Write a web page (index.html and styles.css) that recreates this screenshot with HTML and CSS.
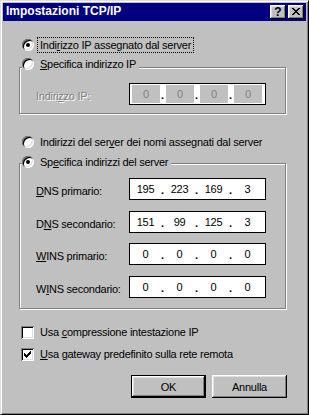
FILE: index.html
```html
<!DOCTYPE html>
<html lang="it">
<head>
<meta charset="utf-8">
<title>Impostazioni TCP/IP</title>
<link rel="stylesheet" href="styles.css">
</head>
<body>
<div class="window">
  <div class="titlebar">
    <span class="title">Impostazioni TCP/IP</span>
    <div class="cap-btns">
      <span class="cap-btn help">?</span>
      <span class="cap-btn close"><svg width="8" height="7" viewBox="0 0 8 7"><path fill="#000" d="M0 0h2v1H0zM6 0h2v1H6zM1 1h2v1H1zM5 1h2v1H5zM2 2h4v1H2zM3 3h2v1H3zM2 4h4v1H2zM1 5h2v1H1zM5 5h2v1H5zM0 6h2v1H0zM6 6h2v1H6z"/></svg></span>
    </div>
  </div>
  <div class="body">
    <div class="opt opt1"><span class="radio checked"></span><span class="lbl focus">Indi<u>r</u>izzo IP assegnato dal server</span></div>

    <div class="group g1">
      <div class="opt head"><span class="radio"></span><span class="lbl"><u>S</u>pecifica indirizzo IP</span></div>
      <div class="frow">
        <span class="flbl dis">Indiri<u>z</u>zo IP:</span>
        <div class="ip dis"><span class="seg">0</span><span class="dot">.</span><span class="seg">0</span><span class="dot">.</span><span class="seg">0</span><span class="dot">.</span><span class="seg">0</span></div>
      </div>
    </div>

    <div class="opt opt3"><span class="radio"></span><span class="lbl">Indirizzi del ser<u>v</u>er dei nomi assegnati dal server</span></div>

    <div class="group g2">
      <div class="opt head"><span class="radio checked"></span><span class="lbl">Sp<u>e</u>cifica indirizzi del server</span></div>
      <div class="frow r1">
        <span class="flbl"><u>D</u>NS primario:</span>
        <div class="ip"><span class="seg">195</span><span class="dot">.</span><span class="seg">223</span><span class="dot">.</span><span class="seg">169</span><span class="dot">.</span><span class="seg">3</span></div>
      </div>
      <div class="frow r2">
        <span class="flbl">D<u>N</u>S secondario:</span>
        <div class="ip"><span class="seg">151</span><span class="dot">.</span><span class="seg">99</span><span class="dot">.</span><span class="seg">125</span><span class="dot">.</span><span class="seg">3</span></div>
      </div>
      <div class="frow r3">
        <span class="flbl"><u>W</u>INS primario:</span>
        <div class="ip"><span class="seg">0</span><span class="dot">.</span><span class="seg">0</span><span class="dot">.</span><span class="seg">0</span><span class="dot">.</span><span class="seg">0</span></div>
      </div>
      <div class="frow r4">
        <span class="flbl">W<u>I</u>NS secondario:</span>
        <div class="ip"><span class="seg">0</span><span class="dot">.</span><span class="seg">0</span><span class="dot">.</span><span class="seg">0</span><span class="dot">.</span><span class="seg">0</span></div>
      </div>
    </div>

    <div class="opt chk-row c1"><span class="chk"></span><span class="lbl">Usa <u>c</u>ompressione intestazione IP</span></div>
    <div class="opt chk-row c2"><span class="chk"><svg width="7" height="7" viewBox="0 0 7 7"><path fill="#000" d="M6 0h1v1H6zM5 1h2v1H5zM0 2h1v1H0zM4 2h3v1H4zM0 3h2v1H0zM3 3h3v1H3zM0 4h5v1H0zM1 5h3v1H1zM2 6h1v1H2z"/></svg></span><span class="lbl"><u>U</u>sa gateway predefinito sulla rete remota</span></div>

    <div class="btns">
      <span class="btn default">OK</span>
      <span class="btn">Annulla</span>
    </div>
  </div>
</div>
</body>
</html>
```
FILE: styles.css
```css
* { box-sizing: border-box; }
html, body { margin: 0; padding: 0; }
body {
  width: 309px;
  height: 415px;
  background: #c0c0c0;
  font-family: "Liberation Sans", Arial, sans-serif;
  font-size: 11px;
  color: #000;
}
.window {
  width: 309px;
  height: 415px;
  background: #c0c0c0;
  border: 1px solid;
  border-color: #dfdfdf #000 #000 #dfdfdf;
  box-shadow: inset 1px 1px #fff, inset -1px -1px #808080;
  padding: 2px;
  display: flex;
  flex-direction: column;
}
.titlebar {
  height: 18px;
  flex: none;
  background: #000080;
  display: flex;
  align-items: center;
  padding: 0 2px 0 3px;
}
.title {
  flex: 1;
  align-self: flex-start;
  color: #fff;
  font-weight: bold;
  font-size: 12px;
  line-height: 16px;
  white-space: nowrap;
}
.cap-btns { display: flex; gap: 2px; }
.cap-btn {
  width: 16px;
  height: 14px;
  background: #c0c0c0;
  box-shadow: inset -1px -1px #000, inset 1px 1px #fff, inset -2px -2px #808080, inset 2px 2px #dfdfdf;
  display: flex;
  align-items: center;
  justify-content: center;
}
.help {
  font-weight: bold;
  font-size: 12px;
  line-height: 14px;
  padding-bottom: 1px;
}
.close { padding-bottom: 1px; }
.close svg { display: block; }

.body {
  flex: 1;
  display: flex;
  flex-direction: column;
  align-items: flex-start;
}
.opt {
  display: flex;
  align-items: center;
  height: 16px;
}
.opt1 { margin: 16px 0 0 19px; }
.opt3 { margin: 20px 0 0 19px; }
.lbl {
  margin-left: 3px;
  border: 1px dotted transparent;
  padding: 0 2px;
  line-height: 14px;
  white-space: nowrap;
  letter-spacing: -0.25px;
}
.lbl.focus { border-color: #000; }

.radio {
  flex: none;
  width: 12px;
  height: 12px;
  border-radius: 50%;
  background: #fff;
  box-shadow: inset 1px 1px 0 #808080, inset -1px -1px 0 #fff, inset 2px 2px 0 #000, inset -2px -2px 0 #dfdfdf;
  display: flex;
  align-items: center;
  justify-content: center;
}
.radio.checked::after {
  content: "";
  width: 4px;
  height: 4px;
  border-radius: 50%;
  background: #000;
}

.group {
  margin-left: 16px;
  width: 267px;
  border: 1px solid #808080;
  box-shadow: inset 1px 1px #fff, 1px 1px #fff;
  display: flex;
  flex-direction: column;
  align-items: flex-start;
}
.head {
  background: #c0c0c0;
  margin-left: 2px;
}
.g1 { margin-top: 14px; padding-bottom: 8px; }
.g1 .head { margin-top: -12px; }
.g2 { margin-top: 13px; padding-bottom: 10px; }
.g2 .head { margin-top: -10px; }

.frow {
  display: flex;
  align-items: flex-start;
  margin-left: 16px;
}
.g1 .frow { margin-top: 11px; }
.r1 { margin-top: 8px; }
.r2 { margin-top: 11px; }
.r3 { margin-top: 10px; }
.r4 { margin-top: 11px; }
.flbl {
  width: 93px;
  padding-top: 6px;
  line-height: 14px;
  white-space: nowrap;
  letter-spacing: -0.25px;
}
.flbl.dis {
  color: #808080;
  text-shadow: 1px 1px 0 #fff;
}

.ip {
  width: 137px;
  height: 22px;
  border: 1px solid #000;
  background: #fff;
  display: flex;
}
.seg {
  width: 31px;
  text-align: center;
  line-height: 20px;
  letter-spacing: -0.25px;
}
.dot {
  width: 3px;
  text-align: center;
  line-height: 17px;
  padding-top: 3px;
  font-weight: bold;
}
.ip.dis .seg {
  width: 28px;
  margin: 1px 1px 1px 2px;
  background: #c0c0c0;
  color: #808080;
  line-height: 18px;
}

.chk-row { margin-left: 18px; }
.c1 { margin-top: 15px; }
.c2 { margin-top: 6px; }
.chk {
  flex: none;
  width: 13px;
  height: 13px;
  background: #fff;
  box-shadow: inset 1px 1px 0 #808080, inset -1px -1px 0 #fff, inset 2px 2px 0 #000, inset -2px -2px 0 #dfdfdf;
  display: flex;
  align-items: center;
  justify-content: center;
}
.chk svg { display: block; }

.btns {
  align-self: stretch;
  display: flex;
  justify-content: flex-end;
  gap: 6px;
  margin-top: 13px;
  padding-right: 19px;
}
.btn {
  width: 75px;
  height: 23px;
  display: flex;
  align-items: center;
  justify-content: center;
  background: #c0c0c0;
  box-shadow: inset -1px -1px #000, inset 1px 1px #fff, inset -2px -2px #808080, inset 2px 2px #dfdfdf;
  letter-spacing: -0.25px;
}
.btn.default { border: 1px solid #000; }
```
